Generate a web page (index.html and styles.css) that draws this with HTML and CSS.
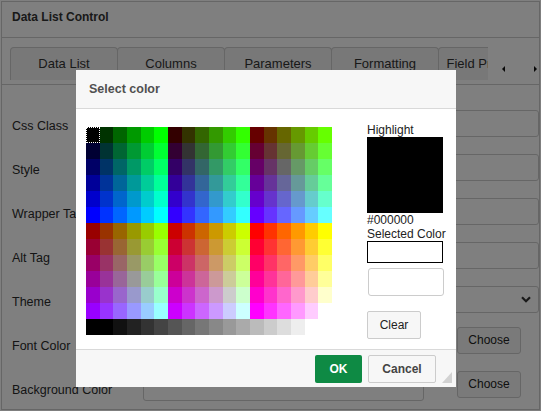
FILE: index.html
```html
<!DOCTYPE html>
<html>
<head>
<meta charset="utf-8">
<title>Data List Control</title>
<link rel="stylesheet" href="styles.css">
</head>
<body>
<div class="panel">
  <div class="panel-head">Data List Control</div>
  <div class="tabbar">
    <div class="tabs">
      <div class="tab">Data List</div>
      <div class="tab">Columns</div>
      <div class="tab">Parameters</div>
      <div class="tab">Formatting</div>
      <div class="tab">Field Properties</div>
    </div>
    <span class="arr arr-l"></span>
    <span class="arr arr-r"></span>
  </div>
  <div class="form">
    <div class="row"><label class="lbl">Css Class</label><div class="input"></div></div>
    <div class="row"><label class="lbl">Style</label><div class="input"></div></div>
    <div class="row"><label class="lbl">Wrapper Tag</label><div class="input"></div></div>
    <div class="row"><label class="lbl">Alt Tag</label><div class="input"></div></div>
    <div class="row"><label class="lbl">Theme</label><div class="input select"><svg class="chev" width="10" height="7" viewBox="0 0 10 7"><path d="M1 1.2 L5 5.2 L9 1.2" fill="none" stroke="#333" stroke-width="2.2"/></svg></div></div>
    <div class="row"><label class="lbl">Font Color</label><div class="input"></div><div class="choose">Choose</div></div>
    <div class="row"><label class="lbl">Background Color</label><div class="input"></div><div class="choose">Choose</div></div>
  </div>
</div>
<div class="overlay"></div>
<div class="dialog">
  <div class="dlg-head">Select color</div>
  <div class="dlg-body">
    <div class="palette">
      <i class="sel" style="background:#000"></i><i style="background:#030"></i><i style="background:#060"></i><i style="background:#090"></i><i style="background:#0c0"></i><i style="background:#0f0"></i><i style="background:#300"></i><i style="background:#330"></i><i style="background:#360"></i><i style="background:#390"></i><i style="background:#3c0"></i><i style="background:#3f0"></i><i style="background:#600"></i><i style="background:#630"></i><i style="background:#660"></i><i style="background:#690"></i><i style="background:#6c0"></i><i style="background:#6f0"></i>
      <i style="background:#003"></i><i style="background:#033"></i><i style="background:#063"></i><i style="background:#093"></i><i style="background:#0c3"></i><i style="background:#0f3"></i><i style="background:#303"></i><i style="background:#333"></i><i style="background:#363"></i><i style="background:#393"></i><i style="background:#3c3"></i><i style="background:#3f3"></i><i style="background:#603"></i><i style="background:#633"></i><i style="background:#663"></i><i style="background:#693"></i><i style="background:#6c3"></i><i style="background:#6f3"></i>
      <i style="background:#006"></i><i style="background:#036"></i><i style="background:#066"></i><i style="background:#096"></i><i style="background:#0c6"></i><i style="background:#0f6"></i><i style="background:#306"></i><i style="background:#336"></i><i style="background:#366"></i><i style="background:#396"></i><i style="background:#3c6"></i><i style="background:#3f6"></i><i style="background:#606"></i><i style="background:#636"></i><i style="background:#666"></i><i style="background:#696"></i><i style="background:#6c6"></i><i style="background:#6f6"></i>
      <i style="background:#009"></i><i style="background:#039"></i><i style="background:#069"></i><i style="background:#099"></i><i style="background:#0c9"></i><i style="background:#0f9"></i><i style="background:#309"></i><i style="background:#339"></i><i style="background:#369"></i><i style="background:#399"></i><i style="background:#3c9"></i><i style="background:#3f9"></i><i style="background:#609"></i><i style="background:#639"></i><i style="background:#669"></i><i style="background:#699"></i><i style="background:#6c9"></i><i style="background:#6f9"></i>
      <i style="background:#00c"></i><i style="background:#03c"></i><i style="background:#06c"></i><i style="background:#09c"></i><i style="background:#0cc"></i><i style="background:#0fc"></i><i style="background:#30c"></i><i style="background:#33c"></i><i style="background:#36c"></i><i style="background:#39c"></i><i style="background:#3cc"></i><i style="background:#3fc"></i><i style="background:#60c"></i><i style="background:#63c"></i><i style="background:#66c"></i><i style="background:#69c"></i><i style="background:#6cc"></i><i style="background:#6fc"></i>
      <i style="background:#00f"></i><i style="background:#03f"></i><i style="background:#06f"></i><i style="background:#09f"></i><i style="background:#0cf"></i><i style="background:#0ff"></i><i style="background:#30f"></i><i style="background:#33f"></i><i style="background:#36f"></i><i style="background:#39f"></i><i style="background:#3cf"></i><i style="background:#3ff"></i><i style="background:#60f"></i><i style="background:#63f"></i><i style="background:#66f"></i><i style="background:#69f"></i><i style="background:#6cf"></i><i style="background:#6ff"></i>
      <i style="background:#900"></i><i style="background:#930"></i><i style="background:#960"></i><i style="background:#990"></i><i style="background:#9c0"></i><i style="background:#9f0"></i><i style="background:#c00"></i><i style="background:#c30"></i><i style="background:#c60"></i><i style="background:#c90"></i><i style="background:#cc0"></i><i style="background:#cf0"></i><i style="background:#f00"></i><i style="background:#f30"></i><i style="background:#f60"></i><i style="background:#f90"></i><i style="background:#fc0"></i><i style="background:#ff0"></i>
      <i style="background:#903"></i><i style="background:#933"></i><i style="background:#963"></i><i style="background:#993"></i><i style="background:#9c3"></i><i style="background:#9f3"></i><i style="background:#c03"></i><i style="background:#c33"></i><i style="background:#c63"></i><i style="background:#c93"></i><i style="background:#cc3"></i><i style="background:#cf3"></i><i style="background:#f03"></i><i style="background:#f33"></i><i style="background:#f63"></i><i style="background:#f93"></i><i style="background:#fc3"></i><i style="background:#ff3"></i>
      <i style="background:#906"></i><i style="background:#936"></i><i style="background:#966"></i><i style="background:#996"></i><i style="background:#9c6"></i><i style="background:#9f6"></i><i style="background:#c06"></i><i style="background:#c36"></i><i style="background:#c66"></i><i style="background:#c96"></i><i style="background:#cc6"></i><i style="background:#cf6"></i><i style="background:#f06"></i><i style="background:#f36"></i><i style="background:#f66"></i><i style="background:#f96"></i><i style="background:#fc6"></i><i style="background:#ff6"></i>
      <i style="background:#909"></i><i style="background:#939"></i><i style="background:#969"></i><i style="background:#999"></i><i style="background:#9c9"></i><i style="background:#9f9"></i><i style="background:#c09"></i><i style="background:#c39"></i><i style="background:#c69"></i><i style="background:#c99"></i><i style="background:#cc9"></i><i style="background:#cf9"></i><i style="background:#f09"></i><i style="background:#f39"></i><i style="background:#f69"></i><i style="background:#f99"></i><i style="background:#fc9"></i><i style="background:#ff9"></i>
      <i style="background:#90c"></i><i style="background:#93c"></i><i style="background:#96c"></i><i style="background:#99c"></i><i style="background:#9cc"></i><i style="background:#9fc"></i><i style="background:#c0c"></i><i style="background:#c3c"></i><i style="background:#c6c"></i><i style="background:#c9c"></i><i style="background:#ccc"></i><i style="background:#cfc"></i><i style="background:#f0c"></i><i style="background:#f3c"></i><i style="background:#f6c"></i><i style="background:#f9c"></i><i style="background:#fcc"></i><i style="background:#ffc"></i>
      <i style="background:#90f"></i><i style="background:#93f"></i><i style="background:#96f"></i><i style="background:#99f"></i><i style="background:#9cf"></i><i style="background:#9ff"></i><i style="background:#c0f"></i><i style="background:#c3f"></i><i style="background:#c6f"></i><i style="background:#c9f"></i><i style="background:#ccf"></i><i style="background:#cff"></i><i style="background:#f0f"></i><i style="background:#f3f"></i><i style="background:#f6f"></i><i style="background:#f9f"></i><i style="background:#fcf"></i><i style="background:#fff"></i>
      <i style="background:#000"></i><i style="background:#000"></i><i style="background:#111"></i><i style="background:#222"></i><i style="background:#333"></i><i style="background:#444"></i><i style="background:#555"></i><i style="background:#666"></i><i style="background:#777"></i><i style="background:#888"></i><i style="background:#999"></i><i style="background:#aaa"></i><i style="background:#bbb"></i><i style="background:#ccc"></i><i style="background:#ddd"></i><i style="background:#eee"></i><i style="background:#fff"></i><i style="background:#fff"></i>
    </div>
    <div class="side">
      <div>Highlight</div>
      <div class="swatch"></div>
      <div>#000000</div>
      <div>Selected Color</div>
      <div class="selected"></div>
      <div class="hexinput"></div>
      <div class="btn clear">Clear</div>
    </div>
  </div>
  <div class="dlg-foot">
    <div class="btn ok">OK</div>
    <div class="btn cancel">Cancel</div>
  </div>
  <svg class="grip" width="10" height="11" viewBox="0 0 10 11"><polygon points="10,0 10,11 0,11" fill="#d2d2d2"/></svg>
</div>
</body>
</html>
```

FILE: styles.css
```css
* { box-sizing: border-box; }
html, body { margin: 0; padding: 0; }
body {
  width: 541px;
  height: 411px;
  overflow: hidden;
  position: relative;
  background: #fff;
  color: #333;
  font-family: "Liberation Sans", Arial, sans-serif;
}

.panel {
  margin: 1px;
  height: 409px;
  border: 1px solid #ccc;
  overflow: hidden;
}
.panel-head {
  height: 36px;
  border-bottom: 1px solid #ccc;
  padding-left: 10px;
  font-size: 12px;
  font-weight: bold;
  line-height: 30px;
}

.tabbar {
  display: flex;
  align-items: flex-start;
  padding: 9px 0 4px 8px;
  border-bottom: 1px solid #ccc;
}
.tabs {
  display: flex;
  width: 478px;
  overflow: hidden;
}
.tab {
  flex: 0 0 108px;
  height: 33px;
  margin-right: -1px;
  border: 1px solid #ccc;
  border-bottom: none;
  border-radius: 4px 4px 0 0;
  background: #f0f0f0;
  text-align: center;
  font-size: 13px;
  line-height: 32px;
  white-space: nowrap;
}
.arr {
  width: 0;
  height: 0;
  margin-top: 19px;
  border-top: 3px solid transparent;
  border-bottom: 3px solid transparent;
}
.arr-l { margin-left: 14px; border-right: 3px solid #111; }
.arr-r { margin-left: 29px; border-left: 3px solid #111; }

.form { padding: 25px 0 0 10px; }
.row {
  display: flex;
  align-items: flex-start;
  height: 27px;
  margin-bottom: 17px;
}
.lbl {
  flex: 0 0 131px;
  padding-top: 9px;
  font-size: 12.5px;
  line-height: 15px;
  white-space: nowrap;
  color: #2a2a2a;
}
.input {
  flex: 1;
  height: 27px;
  border: 1px solid #ccc;
  border-radius: 3px;
  background: #fff;
}
.select {
  display: flex;
  align-items: center;
  justify-content: flex-end;
  padding-right: 7px;
}
.choose {
  flex: 0 0 64px;
  height: 27px;
  margin: -3px 18px 0 33px;
  border: 1px solid #ccc;
  border-radius: 3px;
  background: #f5f5f5;
  font-size: 12px;
  line-height: 25px;
  text-align: center;
  color: #222;
}

.overlay {
  position: fixed;
  left: 0;
  top: 0;
  right: 0;
  bottom: 0;
  background: rgba(0, 0, 0, 0.5);
}

.dialog {
  position: absolute;
  left: 76px;
  top: 70px;
  width: 380px;
  height: 317px;
  background: #fff;
  display: flex;
  flex-direction: column;
}
.dlg-head {
  height: 39px;
  flex: 0 0 39px;
  border-bottom: 1px solid #d9d9d9;
  background: #f7f7f7;
  padding-left: 13px;
  font-size: 12.5px;
  font-weight: bold;
  line-height: 38px;
  color: #505050;
}
.dlg-body {
  flex: 0 0 240px;
  display: flex;
  align-items: flex-start;
  padding: 14px 0 0 10px;
}
.palette {
  display: grid;
  grid-template-columns: repeat(18, 1fr);
  grid-template-rows: repeat(13, 16px);
  width: 246px;
  height: 208px;
  margin-top: 4px;
}
.palette i { display: block; }
.palette .sel {
  outline: 1px dotted #fff;
  outline-offset: -1px;
}
.side {
  margin-left: 35px;
  width: 88px;
  font-size: 12px;
  line-height: 14px;
  color: #222;
  white-space: nowrap;
}
.swatch { width: 76px; height: 76px; background: #000; }
.selected {
  width: 76px;
  height: 22px;
  border: 1px solid #000;
  background: #fff;
}
.hexinput {
  width: 76px;
  height: 28px;
  margin: 5px 0 0 1px;
  border: 1px solid #ccc;
  border-radius: 3px;
}
.btn {
  height: 28px;
  border-radius: 2px;
  text-align: center;
  font-size: 12px;
}
.clear {
  width: 54px;
  margin-top: 15px;
  border: 1px solid #ccc;
  background: #f7f7f7;
  line-height: 26px;
  color: #222;
}
.dlg-foot {
  flex: 1;
  display: flex;
  justify-content: flex-end;
  gap: 6px;
  padding: 5px 20px 0 0;
  border-top: 1px solid #d9d9d9;
  background: #f7f7f7;
}
.ok {
  width: 47px;
  background: #0e8a44;
  color: #fff;
  font-weight: bold;
  line-height: 28px;
}
.cancel {
  width: 68px;
  border: 1px solid #ccc;
  background: #f7f7f7;
  color: #444;
  font-weight: bold;
  line-height: 26px;
}
.grip {
  position: absolute;
  right: 4px;
  bottom: 4px;
}
```
